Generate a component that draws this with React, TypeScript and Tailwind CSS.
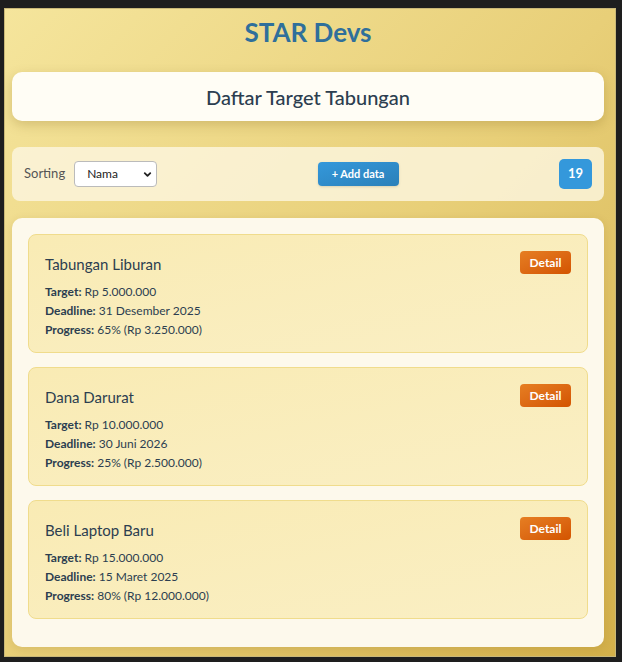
import { ChevronDown } from 'lucide-react'

const items = [
  { name: 'Tabungan Liburan', target: 'Rp 5.000.000', deadline: '31 Desember 2025', progress: '65% (Rp 3.250.000)' },
  { name: 'Dana Darurat', target: 'Rp 10.000.000', deadline: '30 Juni 2026', progress: '25% (Rp 2.500.000)' },
  { name: 'Beli Laptop Baru', target: 'Rp 15.000.000', deadline: '15 Maret 2025', progress: '80% (Rp 12.000.000)' },
]

export default function App() {
  return (
    <div className="w-[622px] h-[662px] bg-[#1e1e1e] pl-[4px] pt-[8px] font-['Lato','Noto_Sans',sans-serif]">
      <div className="w-[612px] h-[649px] border border-[#c9b878] bg-gradient-to-br from-[#f5e59c] via-[#e8cf78] to-[#d3b04a] pl-[7px] pr-[11px] overflow-hidden">
        <h1 className="text-center text-[26px] font-bold text-[#2f6f9b] leading-[32px] mt-[7px]">STAR Devs</h1>

        <div className="mt-[24px] h-[49px] rounded-[10px] bg-[#fffdf5] shadow-[0_4px_12px_rgba(120,90,20,0.25)] flex items-center justify-center">
          <h2 className="text-[20px] text-[#2c3e50] font-medium">Daftar Target Tabungan</h2>
        </div>

        <div className="mt-[26px] h-[54px] rounded-[8px] bg-[#fbf4dc]/85 flex items-center justify-between px-[12px]">
          <div className="flex items-center gap-[9px]">
            <span className="text-[13px] text-[#555]">Sorting</span>
            <div className="relative w-[83px] h-[26px] rounded-[4px] border border-[#bbb] bg-white flex items-center pl-[12px] text-[12px] text-[#222]">
              Nama
              <ChevronDown className="absolute right-[3px] top-[7px] w-[11px] h-[11px]" strokeWidth={4} />
            </div>
          </div>
          <button className="h-[24px] w-[81px] rounded-[4px] bg-gradient-to-br from-[#3498db] to-[#2b80b9] text-white text-[11px] font-bold shadow-sm">
            + Add data
          </button>
          <div className="w-[33px] h-[30px] rounded-[5px] bg-[#3498db] text-white font-bold text-[13px] flex items-center justify-center">19</div>
        </div>

        <div className="mt-[17px] rounded-[10px] bg-[#fdf9ec] px-[16px] pt-[16px] pb-[28px] flex flex-col gap-[14px] shadow-[0_2px_8px_rgba(120,90,20,0.15)]">
          {items.map((it) => (
            <div key={it.name} className="h-[119px] rounded-[8px] border border-[#f0dc8c] bg-gradient-to-br from-[#f9ebb4] to-[#faefc4] px-[16px] pt-[16px]">
              <div className="flex items-center justify-between h-[23px]">
                <span className="text-[15px] text-[#2c3e50] mt-[3px]">{it.name}</span>
                <button className="h-[23px] w-[51px] rounded-[4px] bg-gradient-to-br from-[#e67e22] to-[#d35400] text-white text-[12px] font-bold">
                  Detail
                </button>
              </div>
              <div className="mt-[8px] text-[12px] text-[#2c3e50] leading-[19px]">
                <div><b>Target:</b> {it.target}</div>
                <div><b>Deadline:</b> {it.deadline}</div>
                <div><b>Progress:</b> {it.progress}</div>
              </div>
            </div>
          ))}
        </div>
      </div>
    </div>
  )
}
